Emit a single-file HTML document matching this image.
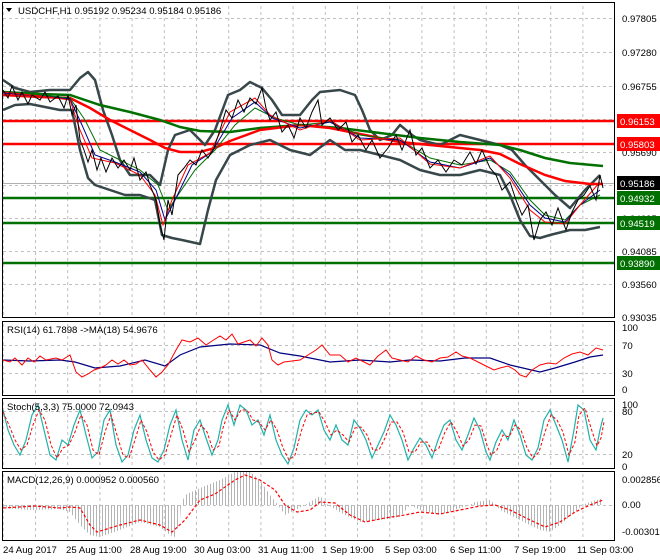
<!DOCTYPE html>
<html><head><meta charset="utf-8"><style>
body{margin:0;background:#fff;}
svg{display:block;font-family:"Liberation Sans",sans-serif;}
text{font-size:9.6px;fill:#000;}
</style></head><body>
<svg width="660" height="560" viewBox="0 0 660 560" xmlns="http://www.w3.org/2000/svg">
<rect width="660" height="560" fill="#fff"/>
<defs>
<pattern id="vg" x="35" y="0" width="32.2" height="560" patternUnits="userSpaceOnUse">
<line x1="0.5" y1="0" x2="0.5" y2="560" stroke="#c0c0c0" stroke-dasharray="3,3"/>
</pattern>
<pattern id="hatch" x="0" y="0" width="3" height="10" patternUnits="userSpaceOnUse">
<rect x="0" y="0" width="1" height="10" fill="#b4b4b4"/>
</pattern>
</defs>
<rect x="3" y="3" width="611" height="314" fill="url(#vg)"/>
<rect x="3" y="322" width="611" height="73" fill="url(#vg)"/>
<rect x="3" y="399" width="611" height="69" fill="url(#vg)"/>
<rect x="3" y="472" width="611" height="68" fill="url(#vg)"/>
<g stroke="#c0c0c0" stroke-dasharray="3,3">
<line x1="3" y1="18.5" x2="614" y2="18.5"/><line x1="3" y1="52.5" x2="614" y2="52.5"/>
<line x1="3" y1="86.5" x2="614" y2="86.5"/><line x1="3" y1="119.5" x2="614" y2="119.5"/>
<line x1="3" y1="152.5" x2="614" y2="152.5"/><line x1="3" y1="185.5" x2="614" y2="185.5"/>
<line x1="3" y1="218.5" x2="614" y2="218.5"/><line x1="3" y1="251.5" x2="614" y2="251.5"/>
<line x1="3" y1="284.5" x2="614" y2="284.5"/>
<line x1="3" y1="345.5" x2="614" y2="345.5"/><line x1="3" y1="373.5" x2="614" y2="373.5"/>
<line x1="3" y1="411.5" x2="614" y2="411.5"/><line x1="3" y1="454.5" x2="614" y2="454.5"/>
<line x1="3" y1="505.5" x2="614" y2="505.5"/>
</g>
<line x1="3" y1="183.5" x2="614" y2="183.5" stroke="#b0b0b0"/>
<g stroke-width="2.5">
<line x1="3" y1="121" x2="614" y2="121" stroke="#ff0000"/>
<line x1="3" y1="144" x2="614" y2="144" stroke="#ff0000"/>
<line x1="3" y1="198" x2="614" y2="198" stroke="#007000"/>
<line x1="3" y1="223" x2="614" y2="223" stroke="#007000"/>
<line x1="3" y1="263" x2="614" y2="263" stroke="#007000"/>
</g>
<g fill="none" stroke="#37474a" stroke-width="2.5" stroke-linejoin="round">
<polyline points="3,80 15,88 30,92 50,90 70,90 80,78 88,72 95,80 103,110 112,135 120,160 130,175 150,175 160,185 168,150 175,135 190,130 205,145 215,130 228,95 240,90 250,82 262,88 272,100 282,115 300,115 312,100 320,92 340,90 355,95 362,110 370,130 380,140 392,135 400,125 412,135 420,140 440,145 460,135 480,140 500,145 512,150 525,165 540,180 555,195 570,208 585,190 600,175"/>
<polyline points="3,110 15,105 30,104 60,110 72,110 80,150 88,178 95,185 110,190 125,195 140,195 155,200 162,235 172,238 182,240 200,244 208,210 216,180 230,155 250,145 270,140 290,150 310,155 330,140 345,150 360,150 380,155 400,160 420,170 440,175 460,175 480,170 500,175 510,195 520,220 530,236 540,238 550,235 570,230 585,230 600,227"/>
</g>
<polyline fill="none" stroke="#007000" stroke-width="2.5" points="3,92 40,94 70,95 100,105 130,112 160,120 180,127 200,131 230,132 260,128 300,125 340,128 380,133 420,138 460,142 500,145 520,150 545,158 570,163 603,166"/>
<polyline fill="none" stroke="#ff0000" stroke-width="2.5" points="3,95 40,97 70,98 90,108 110,120 130,130 150,140 165,148 180,152 200,152 215,148 230,141 260,130 300,125 330,128 360,134 400,142 440,146 480,150 500,154 520,164 545,175 565,181 590,184 603,184"/>
<polyline fill="none" stroke="#007000" stroke-width="1" points="3,93 40,95 70,98 85,120 100,150 120,160 140,170 158,185 168,210 178,195 195,170 215,150 235,125 255,108 275,118 300,125 330,122 360,135 400,140 430,158 460,165 490,160 510,172 530,200 545,215 565,220 580,205 600,195"/>
<polyline fill="none" stroke="#000090" stroke-width="1" points="3,93 40,96 70,99 82,125 95,155 115,162 140,172 156,190 165,220 175,200 192,165 212,152 232,118 255,102 272,118 300,128 330,122 360,138 400,140 430,162 460,168 490,158 510,175 530,205 545,218 565,222 580,205 600,190"/>
<polyline fill="none" stroke="#ff0000" stroke-width="1" points="3,92 40,96 70,100 80,130 92,158 115,163 140,175 155,195 163,225 172,200 188,165 210,153 230,112 255,98 270,115 300,130 330,120 360,140 400,138 430,164 460,168 490,156 510,178 530,210 545,222 565,224 580,205 600,182"/>
<polyline fill="none" stroke="#000" stroke-width="1" points="3,90 8,98 12,86 18,100 22,92 28,104 32,95 40,100 45,92 50,102 58,96 64,108 68,95 72,115 76,105 80,140 84,150 88,162 92,150 97,170 101,158 106,172 112,158 118,168 124,160 130,170 134,158 140,180 146,172 150,185 156,200 160,225 164,240 168,200 172,215 178,175 184,168 190,160 196,165 202,150 208,158 214,148 220,130 226,110 232,118 238,100 244,112 250,98 256,104 262,88 266,108 270,120 276,112 282,132 288,125 294,138 300,118 306,128 312,112 318,100 322,125 330,118 338,130 346,122 352,142 358,135 366,150 372,140 380,158 388,148 396,135 402,150 410,130 416,155 422,148 430,168 438,160 446,172 454,160 462,165 470,152 476,164 482,150 490,168 496,175 502,190 510,182 516,200 522,215 528,205 534,240 540,220 546,212 552,225 558,208 566,230 572,212 578,200 584,195 590,186 596,200 600,175 603,188"/>
<g>
<text x="622" y="22">0.97805</text><text x="622" y="56">0.97280</text>
<text x="622" y="90">0.96755</text><text x="622" y="156">0.95690</text>
<text x="622" y="222">0.94625</text><text x="622" y="255">0.94085</text>
<text x="622" y="288">0.93560</text><text x="622" y="321">0.93035</text>
</g>
<rect x="617" y="114" width="43" height="14" fill="#ff0000"/><text x="620" y="125" style="fill:#fff">0.96153</text>
<rect x="617" y="137" width="43" height="14" fill="#ff0000"/><text x="620" y="148" style="fill:#fff">0.95803</text>
<rect x="617" y="176" width="43" height="14" fill="#000"/><text x="620" y="187" style="fill:#fff">0.95186</text>
<rect x="617" y="191" width="43" height="14" fill="#007000"/><text x="620" y="202" style="fill:#fff">0.94932</text>
<rect x="617" y="216" width="43" height="14" fill="#007000"/><text x="620" y="227" style="fill:#fff">0.94519</text>
<rect x="617" y="256" width="43" height="14" fill="#007000"/><text x="620" y="267" style="fill:#fff">0.93890</text>
<!-- RSI -->
<polyline fill="none" stroke="#000080" stroke-width="1.2" points="3,360 30,361 60,360 75,362 95,368 120,366 145,360 165,366 180,355 200,347 230,344 260,345 280,353 300,356 330,362 360,360 390,362 410,360 440,361 465,358 490,358 510,365 540,372 555,368 575,362 590,357 603,355"/>
<polyline fill="none" stroke="#ff0000" stroke-width="1" points="3,360 10,362 15,358 22,365 28,358 34,362 40,356 46,360 56,358 62,360 70,355 76,372 82,377 88,374 94,370 100,368 106,365 112,360 118,364 124,360 130,365 136,364 142,360 150,370 156,377 162,372 168,365 176,350 182,340 190,342 198,338 206,345 212,341 220,336 226,340 232,334 238,344 244,342 250,340 256,346 262,338 268,345 272,360 278,365 284,362 292,361 300,360 308,355 316,350 322,345 330,355 340,355 348,362 356,358 364,362 370,365 378,356 386,350 392,358 400,360 408,362 416,356 424,360 432,362 440,358 448,357 456,352 462,356 470,358 478,362 486,366 494,370 500,368 508,366 515,370 520,375 526,377 532,370 540,365 548,363 556,364 564,358 572,354 580,352 588,355 596,348 603,350"/>
<text x="622" y="331">100</text><text x="622" y="349">70</text><text x="622" y="377">30</text><text x="622" y="393">0</text>
<!-- Stoch -->
<polyline fill="none" stroke="#20b2aa" stroke-width="1.2" points="3,410 8,430 14,445 20,455 26,440 32,415 38,405 44,430 50,455 56,460 62,440 68,445 74,425 80,410 86,435 92,458 98,452 104,420 110,410 116,445 122,462 128,455 134,430 140,415 146,440 152,458 158,462 164,450 170,425 176,410 182,440 188,460 194,430 200,420 206,438 212,455 218,440 222,420 228,405 234,425 240,405 246,410 252,425 258,420 264,435 270,415 276,440 282,455 288,464 294,448 300,420 306,410 312,415 318,410 324,430 330,440 336,425 342,440 348,445 354,420 360,428 366,440 372,458 378,445 384,432 390,415 396,425 402,440 408,460 414,448 420,438 426,445 432,458 438,440 444,425 450,420 456,440 462,450 468,435 474,418 480,430 486,452 490,460 496,442 502,430 508,440 514,420 520,435 526,455 532,460 538,448 544,420 550,410 556,425 562,440 568,462 574,430 578,405 584,410 590,440 596,450 600,430 603,418"/>
<polyline fill="none" stroke="#ff0000" stroke-width="1" stroke-dasharray="3,2" points="3,412 9,425 15,440 21,450 27,445 33,425 39,410 45,420 51,445 57,458 63,448 69,445 75,432 81,415 87,425 93,450 99,455 105,432 111,415 117,435 123,455 129,458 135,440 141,420 147,432 153,452 159,460 165,455 171,435 177,415 183,430 189,452 195,440 201,425 207,432 213,450 219,446 223,428 229,410 235,420 241,410 247,410 253,420 259,422 265,430 271,420 277,430 283,448 289,460 295,455 301,432 307,415 313,413 319,412 325,422 331,435 337,430 343,435 349,442 355,428 361,427 367,435 373,450 379,450 385,438 391,422 397,422 403,432 409,452 415,452 421,442 427,442 433,452 439,448 445,432 451,422 457,432 463,446 469,440 475,425 481,426 487,445 491,455 497,450 503,435 509,437 515,425 521,430 527,448 533,458 539,452 545,432 551,415 557,420 563,432 569,455 575,442 579,415 585,408 591,428 597,446 601,438 604,422"/>
<text x="622" y="408">100</text><text x="622" y="415">80</text><text x="622" y="458">20</text><text x="622" y="470">0</text>
<!-- MACD histogram -->
<polygon fill="url(#hatch)" points="3,505 3,508 30,510 60,509 70,512 80,525 90,535 100,537 120,530 140,522 160,527 170,535 175,537 180,520 181,505 185,495 200,488 220,480 235,472 250,472 260,480 270,495 278,505 285,515 295,510 305,505 320,496 328,505 345,515 360,522 380,520 400,517 410,505 420,510 440,515 460,508 470,505 475,502 490,500 496,505 500,510 520,520 540,530 550,532 560,525 575,512 582,505 590,502 603,498 603,505"/>
<polyline fill="none" stroke="#ff0000" stroke-width="1.2" stroke-dasharray="3,2" points="3,508 35,506 60,508 70,507 80,508 90,525 97,532 120,525 140,520 160,525 172,532 185,520 200,500 215,494 235,480 245,475 260,480 275,490 285,505 297,512 310,510 320,502 335,503 350,515 365,522 385,518 405,515 420,512 440,514 460,510 480,506 495,505 510,510 530,520 545,527 560,522 575,512 590,505 603,500"/>
<text x="622" y="483">0.002856</text><text x="622" y="508">0.00</text><text x="622" y="535">-0.003017</text>
<g fill="none" stroke="#000" stroke-width="1">
<rect x="2.5" y="2.5" width="612" height="315"/>
<rect x="2.5" y="321.5" width="612" height="74"/>
<rect x="2.5" y="398.5" width="612" height="70"/>
<rect x="2.5" y="471.5" width="612" height="69"/>
</g>
<path d="M6,8 L12,8 L9,12 Z" fill="#000"/>
<text x="18" y="14">USDCHF,H1  0.95192 0.95234 0.95184 0.95186</text>
<text x="7" y="333">RSI(14) 61.7898  -&gt;MA(18) 54.9676</text>
<text x="7" y="410">Stoch(5,3,3) 75.0000 72.0943</text>
<text x="7" y="483">MACD(12,26,9) 0.000952 0.000560</text>
<g>
<text x="3" y="553">24 Aug 2017</text><text x="66" y="553">25 Aug 11:00</text>
<text x="130" y="553">28 Aug 19:00</text><text x="194" y="553">30 Aug 03:00</text>
<text x="258" y="553">31 Aug 11:00</text><text x="322" y="553">1 Sep 19:00</text>
<text x="385" y="553">5 Sep 03:00</text><text x="450" y="553">6 Sep 11:00</text>
<text x="514" y="553">7 Sep 19:00</text><text x="577" y="553">11 Sep 03:00</text>
</g>
</svg>
</body></html>
